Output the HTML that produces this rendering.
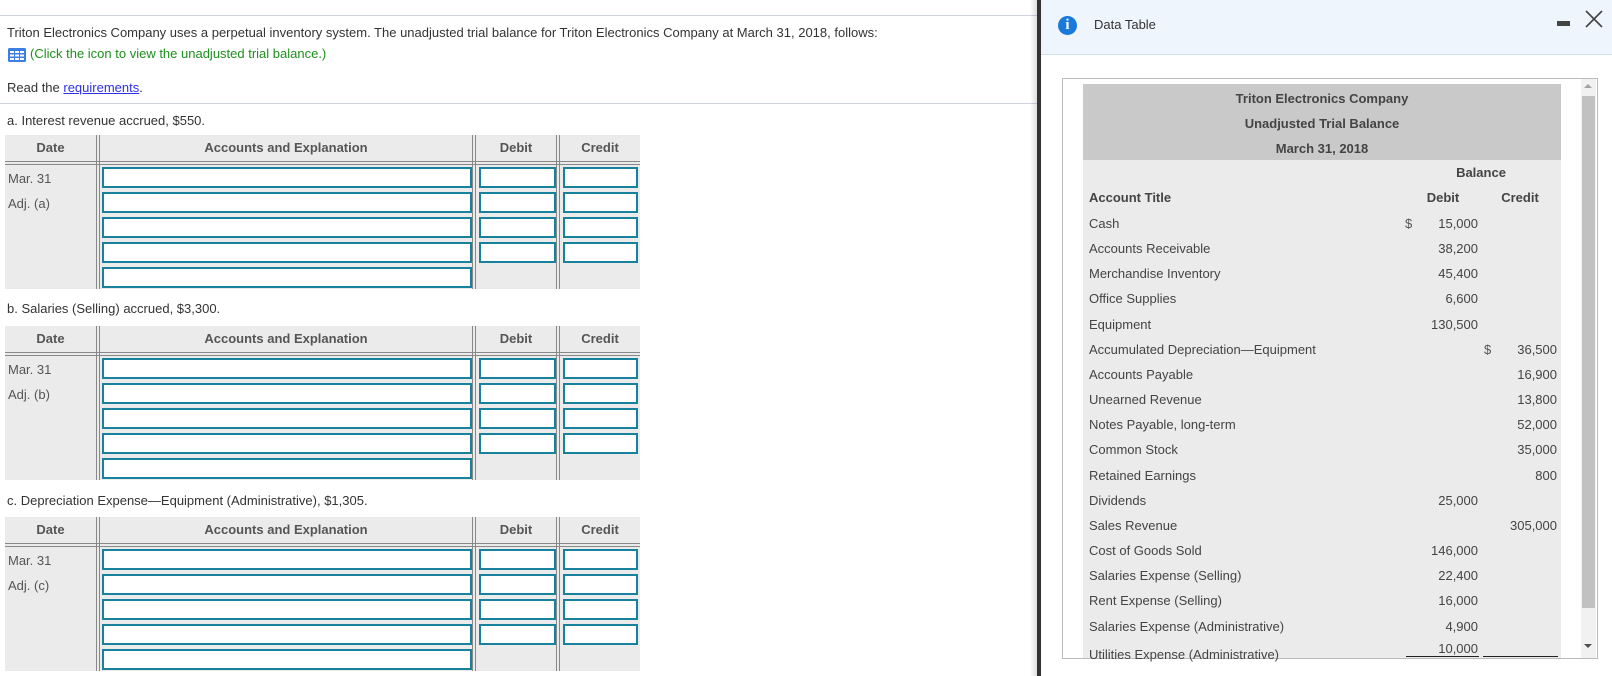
<!DOCTYPE html>
<html><head><meta charset="utf-8">
<style>
*{margin:0;padding:0;box-sizing:border-box}
body{width:1612px;height:676px;overflow:hidden;background:#fff;font-family:"Liberation Sans",Arial,sans-serif;font-size:13px;color:#333;position:relative}
.a{position:absolute;white-space:nowrap}
.tb{position:absolute;left:5px;width:635px;height:154px;background:#ebebeb}
.tb .hl{position:absolute;left:0;right:0;top:26px;height:4px;border-top:1px solid #888;border-bottom:1px solid #888}
.tb .vl{position:absolute;top:0;bottom:0;width:4px;border-left:1px solid #888;border-right:1px solid #888}
.tb .h{position:absolute;top:0;height:26px;line-height:26px;text-align:center;font-weight:bold;color:#555}
.tb .d{position:absolute;left:3px;color:#555}
.in{position:absolute;height:21px;background:#fff;border:2px solid #17819e}
</style></head><body>
<div class="a" style="left:0;top:15px;width:1039px;height:1px;background:#cfd3e0"></div>
<div class="a" style="left:7px;top:25px">Triton Electronics Company uses a perpetual inventory system. The unadjusted trial balance for Triton Electronics Company at March 31, 2018, follows:</div>
<svg class="a" style="left:8px;top:48px" width="18" height="14" viewBox="0 0 18 14"><rect x="0" y="0" width="18" height="14" rx="1.5" fill="#3b7fe0"/><g fill="#fff"><rect x="2" y="3" width="4" height="2"/><rect x="7" y="3" width="4" height="2"/><rect x="12" y="3" width="4" height="2"/><rect x="2" y="6.5" width="4" height="2"/><rect x="7" y="6.5" width="4" height="2"/><rect x="12" y="6.5" width="4" height="2"/><rect x="2" y="10" width="4" height="2"/><rect x="7" y="10" width="4" height="2"/><rect x="12" y="10" width="4" height="2"/></g></svg>
<div class="a" style="left:30px;top:46px;color:#1d8f1d">(Click the icon to view the unadjusted trial balance.)</div>
<div class="a" style="left:7px;top:80px">Read the <span style="color:#2f2fe6;text-decoration:underline">requirements</span>.</div>
<div class="a" style="left:0;top:103px;width:1039px;height:1px;background:#cfd3e0"></div>

<div class="a" style="left:7px;top:113px">a. Interest revenue accrued, $550.</div>
<div class="tb" style="top:135px">
<div class="hl"></div><div class="vl" style="left:91px"></div><div class="vl" style="left:467px"></div><div class="vl" style="left:551px"></div>
<div class="h" style="left:0;width:91px">Date</div><div class="h" style="left:95px;width:372px">Accounts and Explanation</div><div class="h" style="left:471px;width:80px">Debit</div><div class="h" style="left:555px;width:80px">Credit</div>
<div class="d" style="top:36px">Mar. 31</div><div class="d" style="top:61px">Adj. (a)</div>
<div class="in" style="left:97px;top:32px;width:370px"></div><div class="in" style="left:97px;top:57px;width:370px"></div><div class="in" style="left:97px;top:82px;width:370px"></div><div class="in" style="left:97px;top:107px;width:370px"></div><div class="in" style="left:97px;top:132px;width:370px"></div>
<div class="in" style="left:474px;top:32px;width:77px"></div><div class="in" style="left:474px;top:57px;width:77px"></div><div class="in" style="left:474px;top:82px;width:77px"></div><div class="in" style="left:474px;top:107px;width:77px"></div>
<div class="in" style="left:558px;top:32px;width:75px"></div><div class="in" style="left:558px;top:57px;width:75px"></div><div class="in" style="left:558px;top:82px;width:75px"></div><div class="in" style="left:558px;top:107px;width:75px"></div>
</div>

<div class="a" style="left:7px;top:301px">b. Salaries (Selling) accrued, $3,300.</div>
<div class="tb" style="top:326px">
<div class="hl"></div><div class="vl" style="left:91px"></div><div class="vl" style="left:467px"></div><div class="vl" style="left:551px"></div>
<div class="h" style="left:0;width:91px">Date</div><div class="h" style="left:95px;width:372px">Accounts and Explanation</div><div class="h" style="left:471px;width:80px">Debit</div><div class="h" style="left:555px;width:80px">Credit</div>
<div class="d" style="top:36px">Mar. 31</div><div class="d" style="top:61px">Adj. (b)</div>
<div class="in" style="left:97px;top:32px;width:370px"></div><div class="in" style="left:97px;top:57px;width:370px"></div><div class="in" style="left:97px;top:82px;width:370px"></div><div class="in" style="left:97px;top:107px;width:370px"></div><div class="in" style="left:97px;top:132px;width:370px"></div>
<div class="in" style="left:474px;top:32px;width:77px"></div><div class="in" style="left:474px;top:57px;width:77px"></div><div class="in" style="left:474px;top:82px;width:77px"></div><div class="in" style="left:474px;top:107px;width:77px"></div>
<div class="in" style="left:558px;top:32px;width:75px"></div><div class="in" style="left:558px;top:57px;width:75px"></div><div class="in" style="left:558px;top:82px;width:75px"></div><div class="in" style="left:558px;top:107px;width:75px"></div>
</div>

<div class="a" style="left:7px;top:493px">c. Depreciation Expense—Equipment (Administrative), $1,305.</div>
<div class="tb" style="top:517px">
<div class="hl"></div><div class="vl" style="left:91px"></div><div class="vl" style="left:467px"></div><div class="vl" style="left:551px"></div>
<div class="h" style="left:0;width:91px">Date</div><div class="h" style="left:95px;width:372px">Accounts and Explanation</div><div class="h" style="left:471px;width:80px">Debit</div><div class="h" style="left:555px;width:80px">Credit</div>
<div class="d" style="top:36px">Mar. 31</div><div class="d" style="top:61px">Adj. (c)</div>
<div class="in" style="left:97px;top:32px;width:370px"></div><div class="in" style="left:97px;top:57px;width:370px"></div><div class="in" style="left:97px;top:82px;width:370px"></div><div class="in" style="left:97px;top:107px;width:370px"></div><div class="in" style="left:97px;top:132px;width:370px"></div>
<div class="in" style="left:474px;top:32px;width:77px"></div><div class="in" style="left:474px;top:57px;width:77px"></div><div class="in" style="left:474px;top:82px;width:77px"></div><div class="in" style="left:474px;top:107px;width:77px"></div>
<div class="in" style="left:558px;top:32px;width:75px"></div><div class="in" style="left:558px;top:57px;width:75px"></div><div class="in" style="left:558px;top:82px;width:75px"></div><div class="in" style="left:558px;top:107px;width:75px"></div>
</div>

<!-- modal -->
<div class="a" style="left:1030px;top:0;width:10px;height:676px;background:linear-gradient(to right,rgba(0,0,0,0),rgba(0,0,0,0.18))"></div>
<div class="a" style="left:1037px;top:0;width:4px;height:676px;background:#333"></div>
<div class="a" style="left:1041px;top:0;width:571px;height:676px;background:#fff"></div>
<div class="a" style="left:1041px;top:0;width:571px;height:55px;background:#eff5fd;border-bottom:1px solid #cfe0ef"></div>
<div class="a" style="left:1058px;top:16px;width:19px;height:19px;border-radius:50%;background:#1a7ad9;color:#fff;font-weight:bold;font-family:'Liberation Serif',serif;font-size:15px;text-align:center;line-height:19px">i</div>
<div class="a" style="left:1094px;top:17px;font-size:13px;color:#333">Data Table</div>
<div class="a" style="left:1557px;top:21px;width:13px;height:5px;background:#444"></div>
<svg class="a" style="left:1585px;top:10px" width="18" height="18" viewBox="0 0 18 18"><path d="M1 1L17 17M17 1L1 17" stroke="#444" stroke-width="1.6"/></svg>

<div class="a" style="left:1062px;top:78px;width:536px;height:581px;border:1px solid #bbb;background:#fff;overflow:hidden">
 <div class="a" style="left:20px;top:5px;width:478px;height:580px;background:#ebebeb"></div>
 <div class="a" style="left:20px;top:5px;width:478px;height:76px;background:#c9c9c9"></div>
 <div class="a" style="left:518px;top:0;width:15px;height:580px;background:#f1f1f1"></div>
 <div class="a" style="left:519px;top:17px;width:13px;height:512px;background:#c1c1c1"></div>
 <div class="a" style="left:521px;top:5px;width:0;height:0;border-left:4px solid transparent;border-right:4px solid transparent;border-bottom:4px solid #a3a3a3"></div>
 <div class="a" style="left:521px;top:565px;width:0;height:0;border-left:4px solid transparent;border-right:4px solid transparent;border-top:4px solid #505050"></div>
</div>
<div class="a" style="left:1083px;top:86px;width:478px;text-align:center;font-weight:bold;color:#444;line-height:25px">Triton Electronics Company<br>Unadjusted Trial Balance<br>March 31, 2018</div>
<div class="a" style="left:1420px;top:165px;width:122px;text-align:center;font-weight:bold;color:#444">Balance</div>
<div class="a" style="left:1089px;top:190px;font-weight:bold;color:#444">Account Title</div>
<div class="a" style="left:1410px;top:190px;width:66px;text-align:center;font-weight:bold;color:#444">Debit</div>
<div class="a" style="left:1490px;top:190px;width:60px;text-align:center;font-weight:bold;color:#444">Credit</div>
<div class="a" style="left:1089px;top:211px;line-height:25.15px;color:#444">Cash<br>Accounts Receivable<br>Merchandise Inventory<br>Office Supplies<br>Equipment<br>Accumulated Depreciation—Equipment<br>Accounts Payable<br>Unearned Revenue<br>Notes Payable, long-term<br>Common Stock<br>Retained Earnings<br>Dividends<br>Sales Revenue<br>Cost of Goods Sold<br>Salaries Expense (Selling)<br>Rent Expense (Selling)<br>Salaries Expense (Administrative)<br><span style="position:relative;top:3px">Utilities Expense (Administrative)</span></div>
<div class="a" style="left:1405px;top:211px;line-height:25.15px;color:#555">$</div>
<div class="a" style="left:1484px;top:337px;line-height:25.15px;color:#555">$</div>
<div class="a" style="left:1420px;top:211px;width:58px;text-align:right;line-height:25.15px;color:#444">15,000<br>38,200<br>45,400<br>6,600<br>130,500<br>&nbsp;<br>&nbsp;<br>&nbsp;<br>&nbsp;<br>&nbsp;<br>&nbsp;<br>25,000<br>&nbsp;<br>146,000<br>22,400<br>16,000<br>4,900<br><span style="position:relative;top:-3px">10,000</span></div>
<div class="a" style="left:1498px;top:211px;width:59px;text-align:right;line-height:25.15px;color:#444">&nbsp;<br>&nbsp;<br>&nbsp;<br>&nbsp;<br>&nbsp;<br>36,500<br>16,900<br>13,800<br>52,000<br>35,000<br>800<br>&nbsp;<br>305,000</div>
<div class="a" style="left:1406px;top:656px;width:73px;height:1px;background:#222"></div>
<div class="a" style="left:1483px;top:656px;width:75px;height:1px;background:#222"></div>
</body></html>
